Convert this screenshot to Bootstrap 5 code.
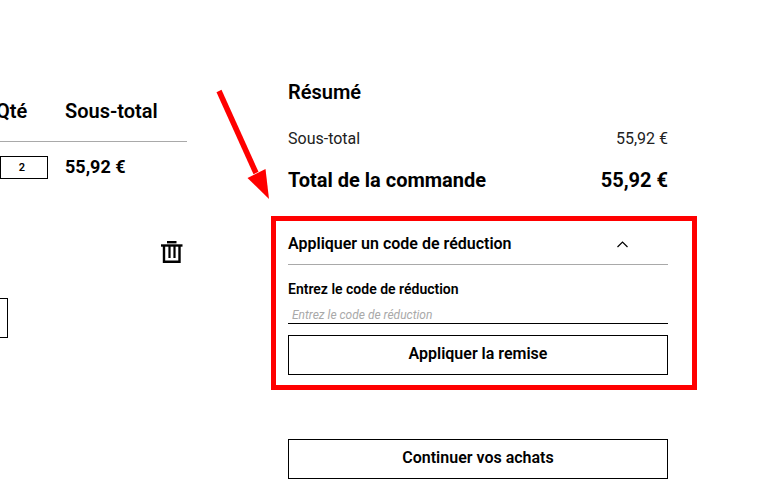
<!DOCTYPE html>
<html lang="fr">
<head>
<meta charset="utf-8">
<title>Panier</title>
<link href="https://cdn.jsdelivr.net/npm/bootstrap@5.3.0/dist/css/bootstrap.min.css" rel="stylesheet">
<style>
html, body { height: 100%; overflow: hidden; }
body { font-family: Roboto, "Liberation Sans", sans-serif; color: #000; background: #fff; }
.page-wrap { height: 496px; position: relative; padding-top: 81px; }
.cart-col { width: 187px; flex: none; overflow: hidden; }
.cart-head { height: 61px; border-bottom: 1px solid #a9a9a9; font-size: 20px; font-weight: 600; padding-top: 19px; line-height: 22px; white-space: nowrap; }
.qty-head { width: 69px; flex: none; margin-left: -4px; }
.cart-line { font-size: 18px; font-weight: 700; line-height: 22px; padding-top: 14px; }
.qty-box { width: 48px; height: 23px; border: 1px solid #000; font-size: 11px; font-weight: 600; line-height: 21px; text-align: right; padding-right: 22px; flex: none; }
.qty-cell { width: 65px; flex: none; }
.trash-row { padding-top: 62px; padding-right: 4px; height: 119px; }
.stub-btn { width: 8px; height: 40px; border: 1px solid #000; border-left: 0; }
.gap-col { width: 101px; flex: none; }
.sum-col { width: 380px; flex: none; }
.sum-title { font-size: 20px; font-weight: 600; line-height: 22px; margin: 0 0 26px; }
.sum-row { font-size: 16px; line-height: 20px; color: #212121; }
.sum-total { font-size: 20px; font-weight: 700; line-height: 24px; margin-top: 19px; color: #000; }
.promo-box { border: 5px solid #f00; margin: 24px -29px 0 -17px; padding: 12px 24px 10px 12px; height: 174px; }
.promo-head { font-size: 16px; font-weight: 600; height: 32px; line-height: 20px; border-bottom: 1px solid #a9a9a9; padding: 1px 0 0; }
.promo-chev { margin-right: 40px; margin-top: 7px; }
.promo-label { font-size: 14px; font-weight: 600; line-height: 18px; margin: 15px 0 0; display: block; }
.promo-input { display: block; width: 100%; height: 26px; border: 0; border-bottom: 1px solid #000; border-radius: 0; outline: 0; padding: 9px 4px 0; font-size: 12px; font-style: italic; }
.promo-input::placeholder { color: #a9a9a9; opacity: 1; }
.outline-btn { display: block; width: 100%; height: 40px; border: 1px solid #000; border-radius: 0; background: #fff; color: #000; font-size: 16px; font-weight: 600; padding: 0 0 2px; }
.promo-apply { margin-top: 11px; }
.shop-btn { margin-top: 49px; }
.arrow-svg { position: absolute; left: 210px; top: 85px; }
</style>
</head>
<body>
<div class="page-wrap d-flex">
  <div class="cart-col">
    <div class="cart-head d-flex">
      <div class="qty-head">Qté</div>
      <div>Sous-total</div>
    </div>
    <div class="cart-line d-flex align-items-start">
      <div class="qty-cell"><div class="qty-box">2</div></div>
      <div>55,92 €</div>
    </div>
    <div class="trash-row d-flex justify-content-end">
      <svg width="22" height="22" viewBox="0 0 22 22" fill="none" stroke="#000" stroke-width="2.400" aria-label="Supprimer">
        <path d="M6 1.200h9.500" />
        <path d="M0 4.500h21.500" />
        <path d="M3 4.500v16.300h15.500V4.500"/>
        <path d="M8.500 4.500v12.500M13.500 4.500v12.500" stroke-width="2.200"/>
      </svg>
    </div>
    <div class="stub-btn"></div>
  </div>
  <div class="gap-col"></div>
  <div class="sum-col">
    <h2 class="sum-title">Résumé</h2>
    <div class="sum-row d-flex justify-content-between"><span>Sous-total</span><span>55,92 €</span></div>
    <div class="sum-total d-flex justify-content-between"><span>Total de la commande</span><span>55,92 €</span></div>
    <div class="promo-box">
      <div class="promo-head d-flex justify-content-between align-items-start">
        <span>Appliquer un code de réduction</span>
        <svg class="promo-chev" width="11" height="7" viewBox="0 0 11 7" fill="none" stroke="#000" stroke-width="1.200"><path d="M.5 6 5.500 1l5 5"/></svg>
      </div>
      <label class="promo-label" for="promo">Entrez le code de réduction</label>
      <input id="promo" class="promo-input" type="text" placeholder="Entrez le code de réduction">
      <button class="outline-btn btn promo-apply" type="button">Appliquer la remise</button>
    </div>
    <button class="outline-btn btn shop-btn" type="button">Continuer vos achats</button>
  </div>
  <svg class="arrow-svg" width="70" height="120" viewBox="210 85 70 120" aria-hidden="true">
    <path d="M219 91 256 173" stroke="#f00" stroke-width="5.500" fill="none"/>
    <path d="M269 199 247.500 178 265.500 169Z" fill="#f00"/>
  </svg>
</div>
<script src="https://cdn.jsdelivr.net/npm/bootstrap@5.3.0/dist/js/bootstrap.bundle.min.js"></script>
</body>
</html>
